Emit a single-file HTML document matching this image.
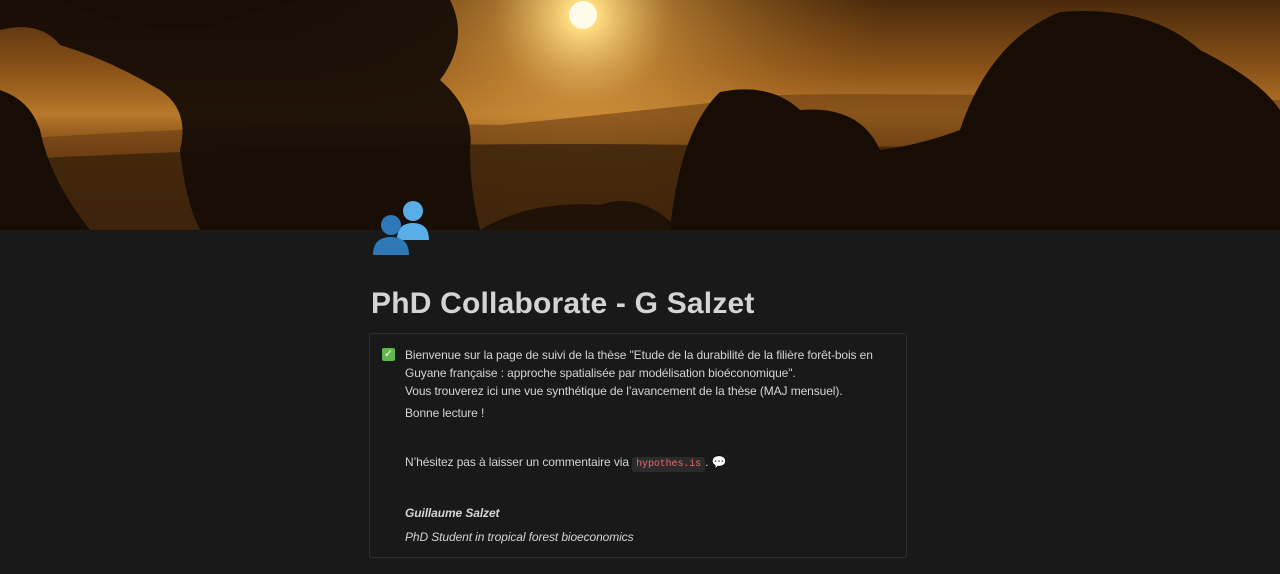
<!DOCTYPE html>
<html><head><meta charset="utf-8"><style>
body{margin:0;background:#191919;width:1280px;height:574px;overflow:hidden;font-family:"Liberation Sans",sans-serif;}
.hdr{position:absolute;left:0;top:0;width:1280px;height:230px;}
.icon{position:absolute;left:371px;top:197px;}
h1{position:absolute;left:371px;top:287px;margin:0;font-size:30px;font-weight:bold;color:#d4d4d4;letter-spacing:0.2px;}
.box{position:absolute;left:369px;top:333px;width:538px;height:225px;border:1px solid #2f2f2f;border-radius:3px;box-sizing:border-box;}
.txt{position:absolute;left:35px;top:12px;width:498px;font-size:12px;line-height:18px;color:#d4d4d4;letter-spacing:-0.1px;}
.chk{position:absolute;left:12px;top:14px;width:13px;height:13px;background:#5fb84a;border-radius:2px;color:#fff;font-size:11px;line-height:13px;text-align:center;}
code{font-family:"Liberation Mono",monospace;font-size:10px;color:#ea6a6a;background:#2b2b2b;padding:2px 4px;border-radius:3px;}
</style></head><body>
<svg class="hdr" viewBox="0 0 1280 230" preserveAspectRatio="none">
<defs>
<linearGradient id="sky" x1="0" y1="0" x2="0" y2="1">
<stop offset="0" stop-color="#4a2a0c"/><stop offset="0.3" stop-color="#8a5218"/><stop offset="0.5" stop-color="#b8782a"/><stop offset="0.65" stop-color="#7a4816"/><stop offset="0.85" stop-color="#3a230b"/><stop offset="1" stop-color="#1c1207"/></linearGradient>
<radialGradient id="sun" cx="583" cy="15" r="300" gradientUnits="userSpaceOnUse">
<stop offset="0" stop-color="#fff8d8"/><stop offset="0.05" stop-color="#ffdc80"/><stop offset="0.3" stop-color="#d89a40" stop-opacity="0.6"/><stop offset="1" stop-color="#a0621c" stop-opacity="0"/></radialGradient>
</defs>
<rect width="1280" height="230" fill="url(#sky)"/>
<rect width="1280" height="230" fill="url(#sun)"/>
<path d="M0 140 Q300 120 500 125 Q650 110 780 95 Q900 92 1280 100 L1280 230 L0 230Z" fill="#6a3e12" opacity="0.6"/>
<path d="M0 160 Q400 140 700 145 Q1000 150 1280 140 L1280 230 L0 230Z" fill="#3a220a" opacity="0.8"/>
<g fill="#170d05">
<path d="M0 0 L0 30 Q40 20 60 45 Q110 60 160 90 Q190 110 180 150 Q185 200 200 230 L480 230 Q470 190 470 150 Q475 110 440 80 Q470 40 450 0Z" opacity="0.95"/>
<path d="M60 0 Q120 30 200 30 Q260 10 300 0Z"/>
<path d="M0 90 Q30 100 40 130 Q50 180 90 230 L0 230Z"/>
<path d="M670 230 Q680 130 720 92 Q770 82 800 110 Q860 105 880 150 Q920 145 960 130 Q990 40 1060 12 Q1150 5 1200 50 Q1260 80 1280 110 L1280 230Z"/>
<path d="M480 230 Q530 200 600 205 Q640 190 680 230Z" opacity="0.8"/>
</g>
<circle cx="583" cy="15" r="14" fill="#fffbe8"/>
</svg>
<svg class="icon" width="62" height="60" viewBox="0 0 62 60">
<circle cx="42" cy="14" r="10" fill="#5aaee8"/><path d="M26 43 Q26 26 42 26 Q58 26 58 43Z" fill="#5aaee8"/>
<circle cx="20" cy="28" r="10" fill="#2d79b8"/><path d="M2 58 Q2 40 20 40 Q38 40 38 58Z" fill="#2d79b8"/>
</svg>
<h1>PhD Collaborate - G Salzet</h1>
<div class="box">
<div class="chk">✓</div>
<div class="txt">
Bienvenue sur la page de suivi de la thèse "Etude de la durabilité de la filière forêt-bois en Guyane française : approche spatialisée par modélisation bioéconomique".<br>
Vous trouverez ici une vue synthétique de l’avancement de la thèse (MAJ mensuel).
<div style="margin-top:4px">Bonne lecture !</div>
<div style="margin-top:31px">N’hésitez pas à laisser un commentaire via <code>hypothes.is</code>. <span style="color:#5aaee8">💬</span></div>
<div style="margin-top:30px;font-weight:bold;font-style:italic">Guillaume Salzet</div>
<div style="margin-top:6px;font-style:italic">PhD Student in tropical forest bioeconomics</div>
</div></div>
</body></html>
